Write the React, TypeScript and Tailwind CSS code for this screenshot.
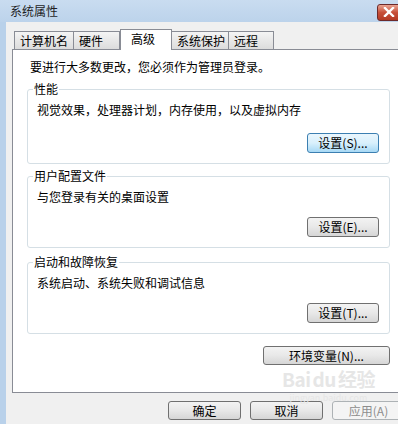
import React from "react";

const font = { fontFamily: '"Noto Sans CJK SC", "Noto Sans", sans-serif' };

type BtnProps = {
    label: string;
    width: string;
    variant?: "normal" | "focus" | "disabled";
    extra?: string;
};

// win7 style push button
const Btn = ({ label, width, variant = "normal", extra = "" }: BtnProps) => {
    let look =
        "border-[#707070] bg-linear-to-b from-[#f3f3f3] via-[#e8e8e8] to-[#d6d6d6] text-black";
    if (variant === "focus") {
        look =
            "border-[#3c7fb1] bg-linear-to-b from-[#eaf6fd] via-[#d9f0fc] to-[#a7d9f5] text-black";
    }
    if (variant === "disabled") {
        look = "border-[#adb2b5] bg-[#f4f4f4] text-[#8d8d8d]";
    }
    return (
        <div
            className={`flex shrink-0 items-center justify-center rounded-[3px] border text-[12px] leading-none ${look} ${width} ${extra}`}
        >
            {label}
        </div>
    );
};

type GroupProps = {
    title: string;
    desc: string;
    btn: string;
    height: string;
    focus?: boolean;
    className?: string;
};

const Group = ({ title, desc, btn, height, focus, className = "" }: GroupProps) => {
    return (
        <div
            className={`relative ml-[14px] flex w-[363px] flex-col rounded-[3px] border border-[#d5dfe5] ${height} ${className}`}
        >
            <div className="absolute -top-[9px] left-[5px] bg-white px-[1px] text-[12px] leading-[16px] text-black">
                {title}
            </div>
            <div className="pl-[9px] pt-[12px] text-[12px] leading-[16px] text-black">
                {desc}
            </div>
            <div className="mt-auto mb-[10px] mr-[10px] flex justify-end">
                <Btn
                    label={btn}
                    width="w-[72px] h-[20px]"
                    variant={focus ? "focus" : "normal"}
                />
            </div>
        </div>
    );
};

const tabs = ["计算机名", "硬件", "高级", "系统保护", "远程"];
const tabWidths = ["w-[60px]", "w-[47px]", "w-[52px]", "w-[58px]", "w-[46px]"];

function App() {
    return (
        <div
            className="flex h-[424px] w-[398px] flex-col overflow-hidden bg-[#b9d1ea]"
            style={font}
        >
            {/* title bar */}
            <div className="flex h-[22px] shrink-0 items-center bg-linear-to-b from-[#c9dcf0] to-[#bcd3eb]">
                <div className="pl-[10px] text-[12px] leading-none text-[#1e1e1e]">
                    系统属性
                </div>
                <div className="ml-auto -mr-[10px] mt-[2px] flex h-[17px] w-[31px] items-center justify-center rounded-[3px] border border-[#6d2a2a] bg-linear-to-b from-[#e8a493] via-[#c75039] to-[#b33a24]">
                    <svg width="12" height="10" viewBox="0 0 12 10" className="mr-[8px]">
                        <path
                            d="M2 1 L10 9 M10 1 L2 9"
                            stroke="#fff"
                            strokeWidth="2.4"
                            strokeLinecap="square"
                        />
                    </svg>
                </div>
            </div>

            <div className="flex flex-1">
                <div className="w-[6px] shrink-0 bg-[#b9d1ea]" />
                <div className="relative flex flex-1 flex-col bg-[#f0f0f0] pl-[6px] pt-[7px]">
                    {/* tabs */}
                    <div className="ml-[2px] flex h-[20px] items-end">
                        {tabs.map((t, i) =>
                            i === 2 ? (
                                <div
                                    key={t}
                                    className={`relative z-10 -mb-px flex h-[21px] items-start border border-b-0 border-[#898c95] bg-white pl-[10px] pt-[1px] text-[12px] leading-[16px] text-black ${tabWidths[i]}`}
                                >
                                    {t}
                                </div>
                            ) : (
                                <div
                                    key={t}
                                    className={`-ml-px flex h-[18px] items-center border border-b-0 border-[#898c95] bg-linear-to-b from-[#f4f4f4] to-[#dcdcdc] pl-[5px] text-[12px] leading-none text-black first:ml-0 ${tabWidths[i]}`}
                                >
                                    {t}
                                </div>
                            )
                        )}
                    </div>

                    {/* tab panel */}
                    <div className="flex h-[344px] w-[400px] flex-col border border-r-0 border-[#898c95] bg-white">
                        <div className="pl-[17px] pt-[9px] text-[12px] leading-[16px] text-black">
                            要进行大多数更改，您必须作为管理员登录。
                        </div>
                        <Group
                            title="性能"
                            desc="视觉效果，处理器计划，内存使用，以及虚拟内存"
                            btn="设置(S)..."
                            height="h-[75px]"
                            focus
                            className="mt-[14px]"
                        />
                        <Group
                            title="用户配置文件"
                            desc="与您登录有关的桌面设置"
                            btn="设置(E)..."
                            height="h-[72px]"
                            className="mt-[12px]"
                        />
                        <Group
                            title="启动和故障恢复"
                            desc="系统启动、系统失败和调试信息"
                            btn="设置(T)..."
                            height="h-[72px]"
                            className="mt-[14px]"
                        />
                        <div className="ml-[250px] mt-[12px] flex">
                            <Btn label="环境变量(N)..." width="w-[127px] h-[19px]" />
                        </div>
                    </div>

                    {/* bottom buttons */}
                    <div className="mt-[8px] flex gap-[9px] pl-[156px]">
                        <Btn label="确定" width="w-[73px] h-[19px]" />
                        <Btn label="取消" width="w-[73px] h-[19px]" />
                        <Btn label="应用(A)" width="w-[73px] h-[19px]" variant="disabled" />
                    </div>

                    {/* faint watermark */}
                    <div className="pointer-events-none absolute left-[276px] top-[347px] flex flex-col items-center text-[#e6e6e6]">
                        <div className="text-[19px] font-bold leading-none tracking-tight">
                            Bai<span className="mx-[2px]">du</span>经验
                        </div>
                        <div className="mt-[5px] text-[9px] leading-none">jingyan.baidu.com</div>
                    </div>
                </div>
            </div>
        </div>
    );
}

export default App;
